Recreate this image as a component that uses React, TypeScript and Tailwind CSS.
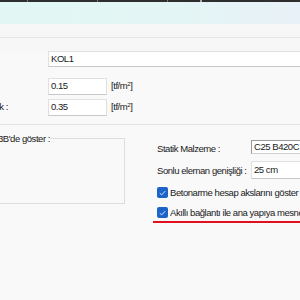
import React from "react";

const font = { fontFamily: '"Liberation Sans", Arial, sans-serif' };
const txt = "text-[9.5px] tracking-[-0.45px] text-[#1a1a1a]";

function Box({ value, className = "" }: { value: string; className?: string }) {
  return (
    <div
      className={`flex items-center bg-white pl-[2px] ${txt} border border-[#e0e0e0] border-b-[#c8c8c8] ${className}`}
    >
      {value}
    </div>
  );
}

function Check({ label }: { label: string }) {
  return (
    <div className="flex h-[13px] items-center gap-[2px] whitespace-nowrap">
      <span className="grid h-[11px] w-[11px] shrink-0 place-items-center rounded-[2px] bg-[#1e64c8]">
        <svg width="7" height="6" viewBox="0 0 7 6">
          <path d="M0.8 3.2 L2.7 4.9 L6.2 1.1" fill="none" stroke="#cfe0f7" strokeWidth="1" />
        </svg>
      </span>
      <span className={`${txt} leading-[13px]`}>{label}</span>
    </div>
  );
}

function Unit() {
  return (
    <span className={`ml-[4px] ${txt}`}>
      [tf/m<sup className="text-[6px]">2</sup>]
    </span>
  );
}

export default function App() {
  return (
    <div className="h-[300px] w-[300px] overflow-hidden bg-[#f9f9f9]" style={font}>
      {/* üst şerit */}
      <div className="flex h-[2px] bg-[#2e2e2e]">
        <span className="ml-[27px] h-[2px] w-px bg-[#777]" />
        <span className="ml-[69px] h-[2px] w-px bg-[#777]" />
        <span className="ml-[69px] h-[2px] w-px bg-[#777]" />
        <span className="ml-[32px] h-[2px] w-[2px] bg-[#aaa]" />
      </div>
      <div className="h-[22px] bg-gradient-to-r from-[#e2f7f3] via-[#e3f6f5] to-[#e8f1f7]" />
      <div className="h-[14px] border-b border-[#e4e4e4] bg-[#f7f7f7]" />
      <div className="h-[13px] bg-[#f7f7f7]" />

      {/* ad */}
      <div className="pl-[48px]">
        <Box value="KOL1" className="h-[16px] border-r-0" />
      </div>

      {/* yükler */}
      <div className="mt-[11px] flex flex-col gap-[4px]">
        <div className="flex items-center">
          <div className="w-[48px]" />
          <Box value="0.15" className="h-[17px] w-[59px]" />
          <Unit />
        </div>
        <div className="flex items-center">
          <div className={`flex w-[8px] justify-end overflow-hidden whitespace-nowrap ${txt}`}>
            Hareketli yük :
          </div>
          <div className="w-[40px]" />
          <Box value="0.35" className="h-[17px] w-[59px]" />
          <Unit />
        </div>
      </div>

      <div className="mt-[8px] h-px bg-[#e2e2e2]" />

      {/* alt bölüm */}
      <div className="mt-[7px] flex">
        <div className="w-[125px] shrink-0">
          <div className="flex h-[13px] items-center">
            <div className={`flex w-[50px] justify-end overflow-hidden whitespace-nowrap leading-[13px] ${txt}`}>
              Elemanları 3B'de göster :
            </div>
            <div className="h-px flex-1 bg-[#dedede]" />
          </div>
          <div className="-mt-[7px] h-[66px] border-b border-r border-[#dedede]" />
        </div>

        <div className="ml-[32px] flex flex-1 flex-col pt-[8px]">
          <div className="flex h-[14px] items-center">
            <span className={`w-[94px] whitespace-nowrap pt-[4px] ${txt}`}>Statik Malzeme :</span>
            <div className={`flex h-[14px] flex-1 items-center whitespace-nowrap border border-r-0 border-[#9a9a9a] border-b-[#d0d0d0] bg-white pl-[2px] ${txt}`}>
              C25 B420C
            </div>
          </div>
          <div className="mt-[7px] flex h-[18px] items-center">
            <span className={`w-[94px] whitespace-nowrap pt-[2px] ${txt}`}>Sonlu eleman genişliği :</span>
            <Box value="25 cm" className="h-[18px] flex-1 items-start border-r-0 pt-[1px]" />
          </div>
          <div className="mt-[7px]">
            <Check label="Betonarme hesap akslarını göster" />
          </div>
          <div className="mt-[7px]">
            <Check label="Akıllı bağlantı ile ana yapıya mesnetlendir" />
          </div>
        </div>
      </div>
      <div className="ml-[153px] mt-[2px] h-[2px] bg-[#e0101c]" />
    </div>
  );
}
